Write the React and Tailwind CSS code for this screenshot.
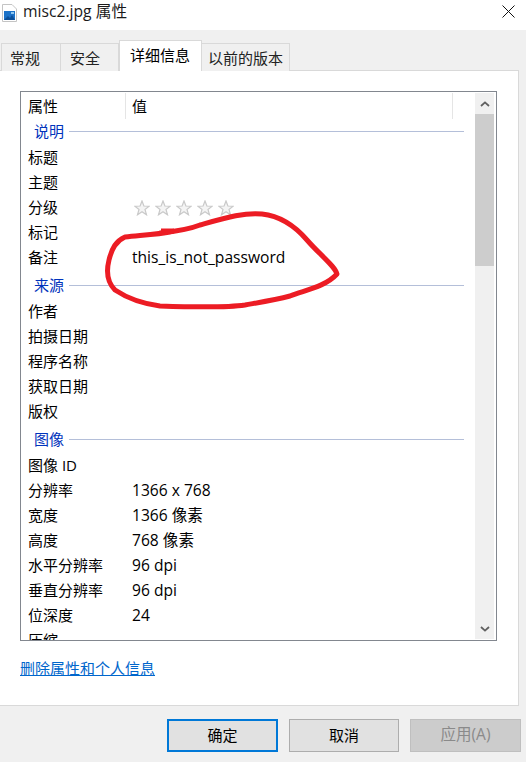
import React from "react";

const font = "font-['Open_Sans','Noto_Sans_CJK_SC',sans-serif]";

const Star = () => (
  <svg width="16" height="16" viewBox="0 0 16 16">
    <polygon
      points="8,1 9.9,6 15.2,6.2 11,9.5 12.5,14.8 8,11.8 3.5,14.8 5,9.5 0.8,6.2 6.1,6"
      fill="#f4f4f4"
      stroke="#c9c9c9"
      strokeWidth="1.2"
    />
  </svg>
);

const Row = ({ label, value }) => (
  <div className="flex h-[25px] items-center shrink-0">
    <div className="w-[111px] pl-[7px] shrink-0">{label}</div>
    <div className="text-[15.6px]">{value}</div>
  </div>
);

const Group = ({ title, className }) => (
  <div className={`flex h-[26px] pb-[2px] items-center pl-[13px] shrink-0 ${className}`}>
    <span className="text-[#0033bc]">{title}</span>
    <div className="ml-[5px] w-[395px] h-px bg-[#b4bfd9]"></div>
  </div>
);

const App = () => {
  return (
    <div className={`relative w-[526px] h-[762px] overflow-hidden bg-[#f0f0f0] text-[15px] text-black ${font}`}>
      {/* title bar */}
      <div className="h-[30px] bg-white flex items-center">
        <svg width="15" height="18" viewBox="0 0 15 18" className="ml-[2px] mt-[-5px]">
          <path d="M0.5 0.5H10L14.5 5V17.5H0.5Z" fill="#fff" stroke="#c4c4c4" />
          <rect x="2" y="7" width="11" height="9" fill="#1c72c8" />
          <path d="M2 16l4-4 2 2 2-3 3 5Z" fill="#0c4f98" />
          <rect x="9" y="8" width="3" height="2" fill="#8fc8f0" />
        </svg>
        <span className="ml-[6px] mt-[-6px] text-[15.7px] text-[#1a1a1a]">misc2.jpg 属性</span>
        <svg width="13" height="13" viewBox="0 0 13 13" className="ml-auto mr-[11px] mt-[-8px]">
          <path d="M0.5 0.5L12.5 12.5M12.5 0.5L0.5 12.5" stroke="#111" strokeWidth="1" fill="none" />
        </svg>
      </div>

      {/* tabs */}
      <div className="h-[41px] pl-px flex items-end relative z-10">
        <div className="w-[60px] h-[28px] bg-[#f0f0f0] border border-b-0 border-[#d9d9d9] flex items-center pl-[8px] pt-[2px] text-[#222]">常规</div>
        <div className="w-[58px] h-[28px] bg-[#f0f0f0] border border-l-0 border-b-0 border-[#d9d9d9] flex items-center pl-[9px] pt-[2px] text-[#222]">安全</div>
        <div className="w-[83px] h-[31px] bg-white border border-b-0 border-[#d9d9d9] flex items-center pl-[10px] pb-[1px]">详细信息</div>
        <div className="w-[88px] h-[28px] bg-[#f0f0f0] border border-l-0 border-b-0 border-[#d9d9d9] flex items-center pl-[6px] pt-[2px] text-[#222]">以前的版本</div>
      </div>

      {/* panel */}
      <div className="w-[519px] h-[636px] bg-white border-t border-r border-b border-[#d9d9d9] mt-[-1px] pt-[20px] pl-[20px]">
        <div className="relative w-[477px] h-[550px] border border-[#82878f] flex overflow-hidden">
          <div className="w-[454px] flex flex-col shrink-0">
            <div className="flex h-[26px] mt-px shrink-0 items-center">
              <div className="w-[105px] pl-[7px] border-r border-[#e5e5e5] h-full flex items-center">属性</div>
              <div className="w-[327px] pl-[6px] border-r border-[#e5e5e5] h-full flex items-center">值</div>
            </div>
            <Group title="说明" />
            <Row label="标题" />
            <Row label="主题" />
            <Row label="分级" value={<div className="flex gap-[5px] ml-[2px]"><Star /><Star /><Star /><Star /><Star /></div>} />
            <Row label="标记" />
            <Row label="备注" value="this_is_not_password" />
            <Group title="来源" className="mt-[3px]" />
            <Row label="作者" />
            <Row label="拍摄日期" />
            <Row label="程序名称" />
            <Row label="获取日期" />
            <Row label="版权" />
            <Group title="图像" className="mt-[3px]" />
            <Row label="图像 ID" />
            <Row label="分辨率" value="1366 x 768" />
            <Row label="宽度" value="1366 像素" />
            <Row label="高度" value="768 像素" />
            <Row label="水平分辨率" value="96 dpi" />
            <Row label="垂直分辨率" value="96 dpi" />
            <Row label="位深度" value="24" />
            <Row label="压缩" />
          </div>

          {/* scrollbar */}
          <div className="w-[19px] ml-auto mr-[2px] my-px bg-[#f0f0f0] flex flex-col shrink-0">
            <div className="h-[21px] flex items-center justify-center shrink-0">
              <svg width="10" height="6" viewBox="0 0 10 6">
                <path d="M1 5L5 1.4L9 5" fill="none" stroke="#606060" strokeWidth="1.8" />
              </svg>
            </div>
            <div className="h-[152px] bg-[#cdcdcd] shrink-0"></div>
            <div className="h-[21px] mt-auto flex items-center justify-center shrink-0">
              <svg width="10" height="6" viewBox="0 0 10 6">
                <path d="M1 1L5 4.6L9 1" fill="none" stroke="#606060" strokeWidth="1.8" />
              </svg>
            </div>
          </div>
        </div>

        <div className="mt-[17px] text-[#0066cc] underline leading-[20px]">删除属性和个人信息</div>
      </div>

      {/* buttons */}
      <div className="flex mt-[13px] justify-end pr-[5px] gap-[11px]">
        <div className="w-[111px] h-[33px] pb-px bg-[#e1e1e1] border-2 border-[#0078d7] flex items-center justify-center">确定</div>
        <div className="w-[110px] h-[33px] pb-px bg-[#e1e1e1] border border-[#adadad] flex items-center justify-center">取消</div>
        <div className="w-[111px] h-[33px] pb-px bg-[#cccccc] border border-[#bfbfbf] flex items-center justify-center text-[15.5px] text-[#8a8a8a]">应用(A)</div>
      </div>

      {/* red marker scribble over the window */}
      <svg className="absolute left-0 top-0 pointer-events-none" width="526" height="762" viewBox="0 0 526 762">
        <path
          d="M170 232 C160 234 145 235 125 237 C116 241 112 248 109 260 C106 272 107 282 115 290 C130 300 145 304 160 306 C190 307 225 308 245 305 C262 302 275 300 290 296 C305 290 325 287 337 274 C335 266 320 255 307 240 C295 226 280 216 262 214 C245 212 225 218 200 225 C190 229 180 231 160 233"
          fill="none"
          stroke="#ec1c24"
          strokeWidth="5"
          strokeLinecap="round"
          strokeLinejoin="round"
        />
        <path d="M161 231 L174 231" fill="none" stroke="#ec1c24" strokeWidth="5" />
      </svg>
    </div>
  );
};

export default App;
